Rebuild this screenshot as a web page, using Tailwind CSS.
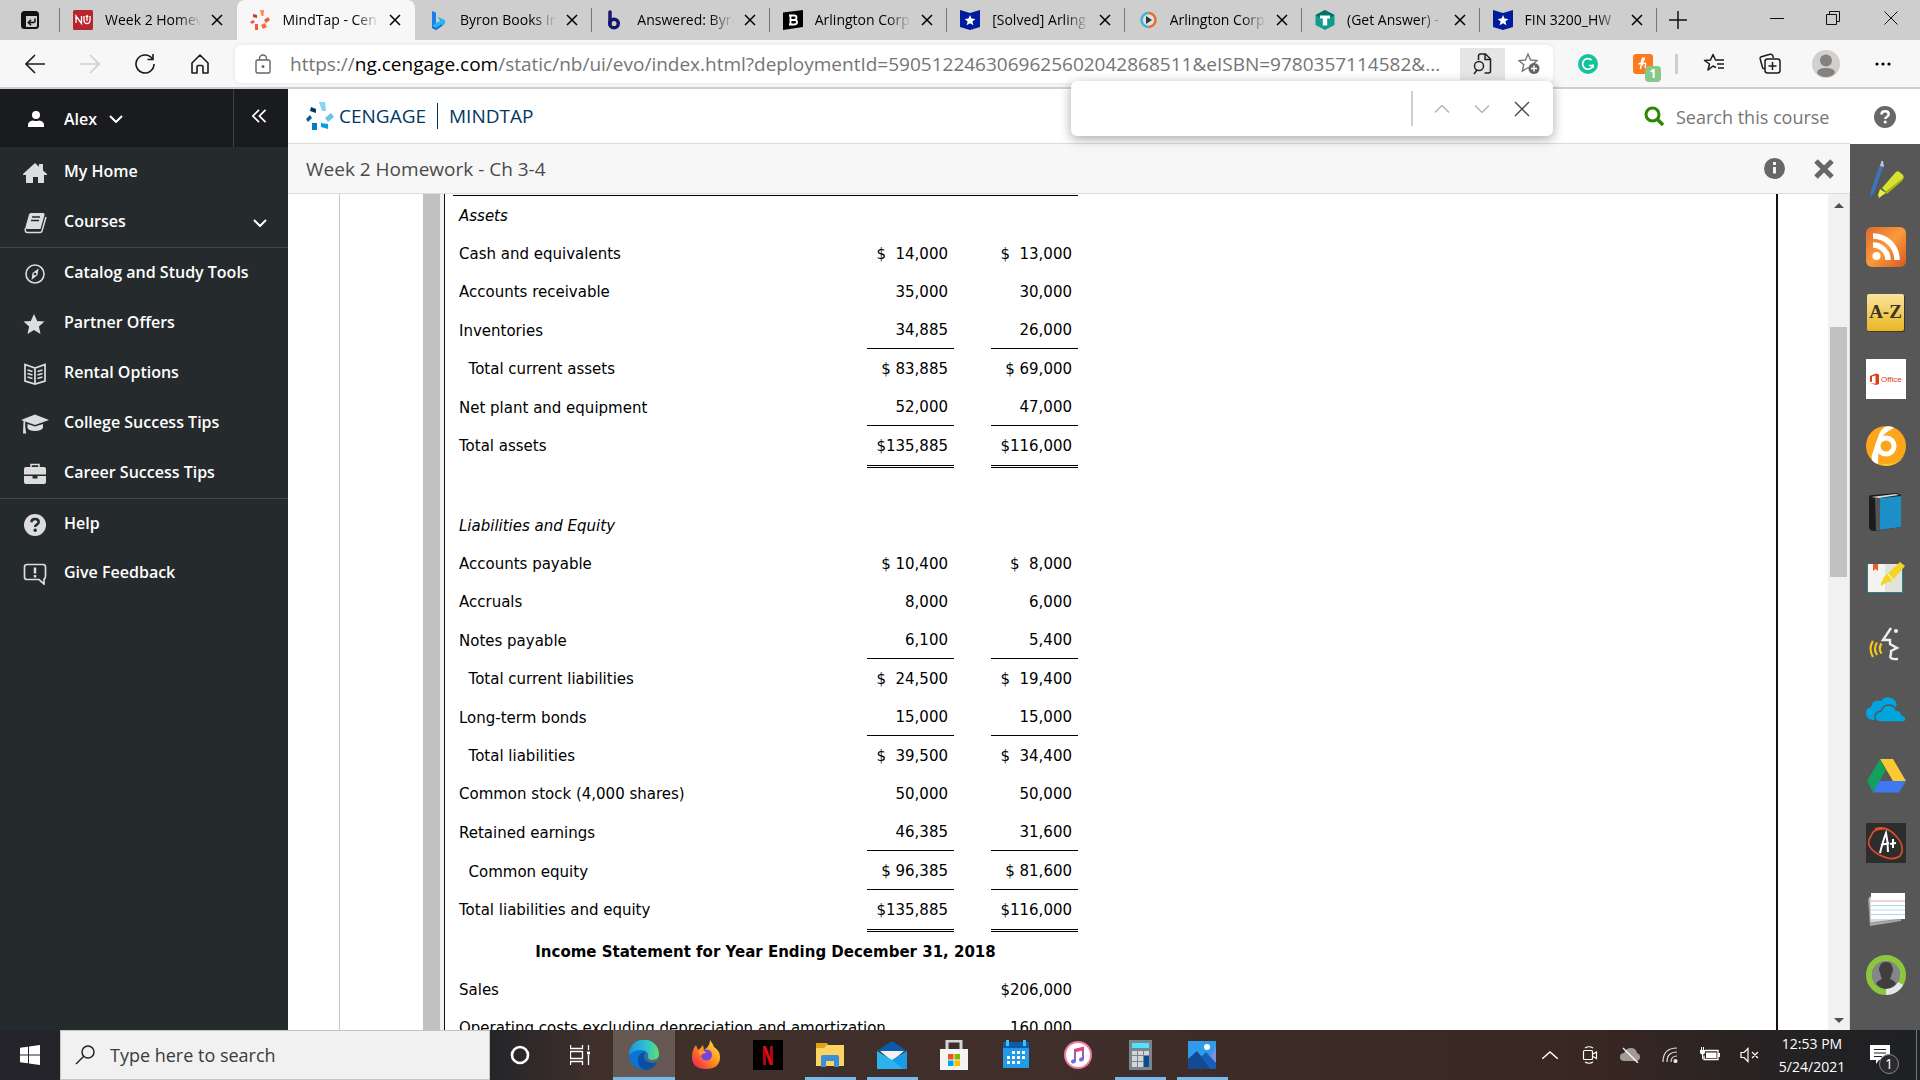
<!DOCTYPE html>
<html lang="en">
<head>
<meta charset="utf-8">
<title>MindTap - Cengage Learning</title>
<script src="https://cdn.jsdelivr.net/npm/@tailwindcss/browser@4"></script>
</head>
<body class="flex h-screen flex-col overflow-hidden bg-white font-['Open_Sans','Noto_Sans',sans-serif] text-black">

<svg class="hidden" aria-hidden="true">
  <symbol id="x" viewBox="0 0 12 12"><path d="M1 1l10 10M11 1L1 11" fill="none" stroke="currentColor" stroke-width="1.5"/></symbol>
  <symbol id="thin-x" viewBox="0 0 16 16"><path d="M1 1l14 14M15 1L1 15" fill="none" stroke="currentColor" stroke-width="1.3"/></symbol>
  <symbol id="down" viewBox="0 0 14 8"><path d="M1 1l6 6 6-6" fill="none" stroke="currentColor" stroke-width="2"/></symbol>
  <symbol id="thin-down" viewBox="0 0 16 8"><path d="M1 .5l7 7 7-7" fill="none" stroke="currentColor" stroke-width="1.3"/></symbol>
  <symbol id="shield" viewBox="0 0 20 20"><path d="M0 0l10 3 10-3v17l-10 3-10-3z" fill="#001b9b"/><path d="M10 5l1.500 3.600 3.900.3-3 2.500 1 3.800L10 13.200l-3.400 2 1-3.800-3-2.500 3.900-.3z" fill="#fff"/></symbol>
</svg>

<!-- Tab strip -->
<header class="flex h-10 shrink-0 items-stretch bg-[#cecece] text-sm">
  <div class="flex w-[60px] shrink-0 items-center justify-between pl-[21px]">
    <button aria-label="Tab actions"><svg class="h-[18px] w-[18px]" viewBox="0 0 18 18"><rect x="1" y="1" width="16" height="16" rx="2.500" fill="none" stroke="#111" stroke-width="2"/><path d="M1 2h16v3H1zM1 2h4v15H1z" fill="#111"/><path d="M14 7.500v2.500q0 1.500-1.500 1.500H7.500M10 8.800L7.300 11.500l2.700 2.700" fill="none" stroke="#111" stroke-width="1.500"/></svg></button>
    <span class="h-6 w-px bg-[#767676]"></span>
  </div>
  <nav class="flex min-w-0 flex-1" aria-label="Tabs">
    <div class="flex min-w-0 flex-1 items-center pl-[13px]">
      <svg class="size-5 shrink-0" viewBox="0 0 20 20"><rect width="20" height="20" rx="1.500" fill="#b9252f"/><path d="M3 13V6l5.500 7.500V6M11 6v4q0 3.500 3 3.500t3-3.500V6M14 5v6M12.700 6.500h2.600" fill="none" stroke="#fff" stroke-width="1.300"/></svg>
      <button class="ml-3 min-w-0 flex-1 overflow-hidden text-left whitespace-nowrap [mask-image:linear-gradient(to_right,black_75%,transparent)]">Week 2 Homew</button>
      <button class="mr-[14px] ml-[10px]" aria-label="Close tab"><svg class="size-3"><use href="#x"/></svg></button>
    </div>
    <div class="flex min-w-0 flex-1 items-center rounded-t-lg bg-[#f7f7f7] pl-[13px]">
      <svg class="size-5 shrink-0" viewBox="0 0 20 20" fill="#f0593a"><path d="M10 0h4l-.5 6h-2z" fill="#ff8a4c"/><path d="M14 10l4-3 2 3-4 3z"/><path d="M11 15l4-2 2 4-4 2z" fill="#ff6b3d"/><path d="M5 14h3v6H5z"/><path d="M0 12l3-2 2 2-3 2z"/><path d="M3 4l4 1v3L3 7z" fill="#e22c2c"/></svg>
      <button class="ml-3 min-w-0 flex-1 overflow-hidden text-left whitespace-nowrap [mask-image:linear-gradient(to_right,black_75%,transparent)]">MindTap - Cen</button>
      <button class="mr-[14px] ml-[10px]" aria-label="Close tab"><svg class="size-3"><use href="#x"/></svg></button>
    </div>
    <div class="flex min-w-0 flex-1 items-center pl-[13px]">
      <svg class="size-5 shrink-0" viewBox="0 0 20 20"><path d="M4 1l4 1.500V14l-4 4z" fill="#1c7df0"/><path d="M4 16l4-3 4-2-2-4 7 3v4l-9 6-4-2z" fill="#25b6ee"/><path d="M4 16l4 2 6-4v2l-6 4-4-2z" fill="#1a63dd"/></svg>
      <button class="ml-3 min-w-0 flex-1 overflow-hidden text-left whitespace-nowrap [mask-image:linear-gradient(to_right,black_75%,transparent)]">Byron Books In</button>
      <button class="mr-[13px] ml-[10px]" aria-label="Close tab"><svg class="size-3"><use href="#x"/></svg></button>
      <span class="h-6 w-px bg-[#767676]"></span>
    </div>
    <div class="flex min-w-0 flex-1 items-center pl-[13px]">
      <svg class="size-5 shrink-0" viewBox="0 0 20 20"><path d="M5 2v12" stroke="#16166f" stroke-width="3.500" stroke-linecap="round"/><circle cx="9" cy="13.500" r="4.300" fill="none" stroke="#16166f" stroke-width="3.500"/></svg>
      <button class="ml-3 min-w-0 flex-1 overflow-hidden text-left whitespace-nowrap [mask-image:linear-gradient(to_right,black_75%,transparent)]">Answered: Byro</button>
      <button class="mr-[13px] ml-[10px]" aria-label="Close tab"><svg class="size-3"><use href="#x"/></svg></button>
      <span class="h-6 w-px bg-[#767676]"></span>
    </div>
    <div class="flex min-w-0 flex-1 items-center pl-[13px]">
      <svg class="size-5 shrink-0" viewBox="0 0 20 20"><path d="M0 2.500L20 0v17L0 20z"/><path d="M7.500 5.500h3.500q2.500 0 2.500 2t-2 2.300q2.500.3 2.500 2.500t-3 2.200H7.500zM6 5.500h3M6 14.500h3M8 10h4" fill="none" stroke="#fff" stroke-width="1.900"/></svg>
      <button class="ml-3 min-w-0 flex-1 overflow-hidden text-left whitespace-nowrap [mask-image:linear-gradient(to_right,black_75%,transparent)]">Arlington Corp</button>
      <button class="mr-[13px] ml-[10px]" aria-label="Close tab"><svg class="size-3"><use href="#x"/></svg></button>
      <span class="h-6 w-px bg-[#767676]"></span>
    </div>
    <div class="flex min-w-0 flex-1 items-center pl-[13px]">
      <svg class="size-5 shrink-0"><use href="#shield"/></svg>
      <button class="ml-3 min-w-0 flex-1 overflow-hidden text-left whitespace-nowrap [mask-image:linear-gradient(to_right,black_75%,transparent)]">[Solved] Arling</button>
      <button class="mr-[13px] ml-[10px]" aria-label="Close tab"><svg class="size-3"><use href="#x"/></svg></button>
      <span class="h-6 w-px bg-[#767676]"></span>
    </div>
    <div class="flex min-w-0 flex-1 items-center pl-[13px]">
      <svg class="size-5 shrink-0" viewBox="0 0 20 20"><circle cx="10.500" cy="10" r="6" fill="#d8e4e8"/><path d="M10.500 17a7 7 0 0 1 0-14" fill="none" stroke="#43b4cf" stroke-width="2.500"/><path d="M10.500 3a7 7 0 0 1 0 14" fill="none" stroke="#f26a2a" stroke-width="2.500"/><path d="M8 6l6 4-6 4z" fill="#333"/></svg>
      <button class="ml-3 min-w-0 flex-1 overflow-hidden text-left whitespace-nowrap [mask-image:linear-gradient(to_right,black_75%,transparent)]">Arlington Corp</button>
      <button class="mr-[13px] ml-[10px]" aria-label="Close tab"><svg class="size-3"><use href="#x"/></svg></button>
      <span class="h-6 w-px bg-[#767676]"></span>
    </div>
    <div class="flex min-w-0 flex-1 items-center pl-[13px]">
      <svg class="size-5 shrink-0" viewBox="0 0 20 20"><path d="M10 0l9.500 5v10L10 20 .5 15V5z" fill="#0c9d8c"/><path d="M10 0l9.500 5L10 10 .5 5z" fill="#067266"/><path d="M5 5.500h10v3h-2.800v7H7.800v-7H5z" fill="#fff"/></svg>
      <button class="ml-3 min-w-0 flex-1 overflow-hidden text-left whitespace-nowrap [mask-image:linear-gradient(to_right,black_75%,transparent)]">(Get Answer) - A</button>
      <button class="mr-[13px] ml-[10px]" aria-label="Close tab"><svg class="size-3"><use href="#x"/></svg></button>
      <span class="h-6 w-px bg-[#767676]"></span>
    </div>
    <div class="flex min-w-0 flex-1 items-center pl-[13px]">
      <svg class="size-5 shrink-0"><use href="#shield"/></svg>
      <button class="ml-3 min-w-0 flex-1 overflow-hidden text-left whitespace-nowrap [mask-image:linear-gradient(to_right,black_75%,transparent)]">FIN 3200_HW</button>
      <button class="mr-[13px] ml-[10px]" aria-label="Close tab"><svg class="size-3"><use href="#x"/></svg></button>
      <span class="h-6 w-px bg-[#767676]"></span>
    </div>
  </nav>
  <div class="flex w-[263px] shrink-0 items-center">
    <button class="flex w-[42px] justify-center" aria-label="New tab"><svg class="size-[18px]" viewBox="0 0 18 18"><path d="M9 0v18M0 9h18" stroke="#111" stroke-width="1.500"/></svg></button>
    <button class="ml-[50px] flex w-14 justify-center pb-1" aria-label="Minimize"><svg class="size-[14px]" viewBox="0 0 14 14"><path d="M0 7.500h14" stroke="#111"/></svg></button>
    <button class="flex w-14 justify-center pb-1" aria-label="Restore"><svg class="size-[14px]" viewBox="0 0 14 14"><path d="M.5 3.500h10v10H.5zM3.500 3V.5h10v10H11" fill="none" stroke="#111"/></svg></button>
    <button class="flex w-[59px] justify-center pb-1" aria-label="Close window"><svg class="size-[14px]" viewBox="0 0 14 14"><path d="M.5.5l13 13M13.500.5l-13 13" stroke="#111"/></svg></button>
  </div>
</header>

<!-- Browser toolbar -->
<div class="relative flex h-[49px] shrink-0 items-center border-b-2 border-[#cfcfcf] bg-[#f7f7f7]">
  <div class="flex w-[235px] shrink-0 items-center pl-[7px] text-[#1b1b1b]">
    <button class="flex w-[55px] justify-center" aria-label="Back"><svg class="size-5" viewBox="0 0 20 20" fill="none" stroke="currentColor" stroke-width="1.600"><path d="M20 10H1M10 1L1 10l9 9"/></svg></button>
    <button class="flex w-[55px] justify-center text-[#cfcfcf]" aria-label="Forward"><svg class="size-5" viewBox="0 0 20 20" fill="none" stroke="currentColor" stroke-width="1.600"><path d="M0 10h19M10 1l9 9-9 9"/></svg></button>
    <button class="flex w-[55px] justify-center" aria-label="Refresh"><svg class="size-5" viewBox="0 0 20 20" fill="none" stroke="currentColor" stroke-width="1.600"><path d="M17.500 5A9 9 0 1 0 19 10M18 0v5.500h-5.500"/></svg></button>
    <button class="flex w-[55px] justify-center" aria-label="Home"><svg class="size-5" viewBox="0 0 20 20" fill="none" stroke="currentColor" stroke-width="1.600"><path d="M2 9l8-8 8 8v10h-5v-6q0-1.500-1.500-1.500h-3Q7 11.500 7 13v6H2z" stroke-linejoin="round"/></svg></button>
  </div>
  <div class="flex h-[38px] min-w-0 flex-1 items-center rounded-md bg-white shadow-[0_0_5px_rgba(0,0,0,0.08)]">
    <button class="flex w-[55px] shrink-0 justify-center" aria-label="Site information"><svg class="h-5 w-4" viewBox="0 0 16 20" fill="none" stroke="#666" stroke-width="1.400"><rect x="1" y="6" width="14" height="13" rx="1.500"/><path d="M4.500 6V4.500a3.500 3.500 0 0 1 7 0V6"/><circle cx="8" cy="12.500" r=".8" fill="#666"/></svg></button>
    <div role="textbox" aria-label="Address" class="min-w-0 flex-1 overflow-hidden text-[19px] leading-6 whitespace-nowrap text-[#757575]">https://<span class="text-black">ng.cengage.com</span>/static/nb/ui/evo/index.html?deploymentId=5905122463069625602042868511&amp;eISBN=9780357114582&amp;...</div>
    <button class="flex h-8 w-[45px] shrink-0 items-center justify-center bg-[#e5e5e5]" aria-label="Find on page"><svg class="h-[22px] w-5" viewBox="0 0 20 22" fill="none" stroke="#222" stroke-width="1.500"><path d="M5.500 7V3q0-2 2-2h5l5 5v12q0 2-2 2h-4M12 1v5.500h5.500"/><circle cx="6" cy="13" r="4.500"/><path d="M4 17l-3 4"/></svg></button>
    <button class="flex w-12 shrink-0 justify-center" aria-label="Add to favorites"><svg class="size-[22px]" viewBox="0 0 22 22"><path d="M10 1l2.600 6 6.400.6-4.800 4.200L15 18l-5-3.300L4.300 18l1.500-6.300L1 7.600 7.400 7z" fill="none" stroke="#777" stroke-width="1.400"/><circle cx="16" cy="15.500" r="5.500" fill="#666"/><path d="M16 12.500v6M13 15.500h6" stroke="#fff" stroke-width="1.400"/></svg></button>
  </div>
  <div class="flex w-[367px] shrink-0 items-center pl-[7px] text-[#1b1b1b]">
    <button class="flex w-14 justify-center" aria-label="Grammarly"><svg class="size-5" viewBox="0 0 20 20"><circle cx="10" cy="10" r="10" fill="#15c39a"/><path d="M13.500 6A5.300 5.300 0 1 0 15 11.500H11M15 10.500V14" fill="none" stroke="#fff" stroke-width="1.700"/></svg></button>
    <button class="relative flex w-[54px] justify-center" aria-label="Honey, 1 offer"><svg class="size-5" viewBox="0 0 20 20"><rect width="20" height="20" rx="3" fill="#ff7a1f"/><path d="M7.500 15L9 6q.5-2.500 2-2 1 1-1.500 4-1.500 1.500-4 2M8 12q2-3 3.500-3t1 2q-1 3 1 3 1 0 1.500-.8" fill="none" stroke="#fff" stroke-width="1.500"/></svg><span class="absolute top-[12px] left-[29px] h-4 w-4 rounded-sm bg-[#85c888] text-center text-xs leading-4 font-bold text-white">1</span></button>
    <span class="mr-[8px] ml-[5px] h-5 w-[3px] bg-[#cfcfcf]"></span>
    <button class="flex w-14 justify-center" aria-label="Favorites"><svg class="size-[22px]" viewBox="0 0 22 22" fill="none" stroke="currentColor" stroke-width="1.500"><path d="M13 14.500l-3-1.500-5 4 1.500-6L1.500 7.500l6-.5L10 1.500 12.500 7H21M14 11h7M15 15h6" stroke-linejoin="round"/></svg></button>
    <button class="flex w-14 justify-center" aria-label="Collections"><svg class="size-[22px]" viewBox="0 0 22 22" fill="none" stroke="currentColor" stroke-width="1.500"><rect x="6" y="6" width="15" height="14" rx="2.500"/><path d="M13.500 9v8M9.500 13h8M6 15.500q-2 .5-2.500-1L1.200 6Q.8 4.300 2.400 3.800L11 1.300q2-.4 2.600 1.200L14.500 5"/></svg></button>
    <button class="flex w-14 justify-center" aria-label="Profile"><svg class="size-7" viewBox="0 0 28 28"><circle cx="14" cy="14" r="14" fill="#d2d0ce"/><circle cx="14" cy="10.500" r="6" fill="#85817e"/><path d="M5 23q0-5 9-5t9 5q-3 4-9 4t-9-4z" fill="#85817e"/></svg></button>
    <button class="flex w-[58px] justify-center" aria-label="Settings and more"><svg class="h-1 w-4" viewBox="0 0 16 4"><circle cx="2" cy="2" r="1.600"/><circle cx="8" cy="2" r="1.600"/><circle cx="14" cy="2" r="1.600"/></svg></button>
  </div>
  <!-- Find-on-page popup -->
  <div class="absolute top-[41px] right-[367px] z-10 flex h-[55px] w-[482px] items-center rounded-md bg-white shadow-[0_3px_12px_rgba(0,0,0,0.35)]">
    <input type="text" aria-label="Find on page" class="h-9 min-w-0 flex-1 px-4 text-base outline-none">
    <span class="h-[35px] w-[2px] bg-[#cfcfcf]"></span>
    <div class="flex w-[140px] items-center pl-[9px]">
      <button class="flex w-10 justify-center text-[#b0b0b0]" aria-label="Previous"><svg class="h-2 w-4 rotate-180"><use href="#thin-down"/></svg></button>
      <button class="flex w-10 justify-center text-[#b0b0b0]" aria-label="Next"><svg class="h-2 w-4"><use href="#thin-down"/></svg></button>
      <button class="flex w-10 justify-center text-[#444]" aria-label="Close find"><svg class="size-4"><use href="#thin-x"/></svg></button>
    </div>
  </div>
</div>

<div class="flex min-h-0 flex-1">
  <!-- Course navigation -->
  <aside class="w-[288px] shrink-0 bg-[#252a2d] text-base font-semibold text-white">
    <div class="flex h-[58px] bg-[#1a1b1e]">
      <button class="flex flex-1 items-center pt-[2px] pl-[28px] text-left"><svg class="h-4 w-4" viewBox="0 0 16 16" fill="#fff"><circle cx="8" cy="4" r="4"/><path d="M0 16v-2q0-4 5-4.500 3 1 6 0 5 .5 5 4.500v2z"/></svg><span class="ml-5">Alex</span><svg class="ml-3 h-2 w-[14px]"><use href="#down"/></svg></button>
      <button class="flex w-[55px] items-center justify-center border-l border-[#3d4043] pr-1 pb-1" aria-label="Collapse menu"><svg class="h-[14px] w-[18px]" viewBox="0 0 18 16" fill="none" stroke="#fff" stroke-width="2"><path d="M9 1L2 8l7 7M16.500 1l-7 7 7 7"/></svg></button>
    </div>
    <nav>
      <a href="#" class="flex h-[50px] items-center pb-[2px] pl-[23px]"><svg class="mt-1 h-[22px] w-6" viewBox="0 0 24 22" fill="#ddd"><path d="M12 1l4 3.700V2h4v6.400l4 3.600v1h-3v8h-6v-6h-5v6H3v-8H0v-1z"/></svg><span class="ml-[17px]">My Home</span></a>
      <a href="#" class="flex h-[51px] items-center border-b border-[#43474a] pb-[2px] pl-[23px]"><svg class="mt-1 h-[22px] w-6" viewBox="0 0 24 22"><path d="M8 1h12q2 0 1.500 2l-4 14H4q-2 0-1.500-2L6 2.500Q6.500 1 8 1z" fill="#ddd"/><path d="M2.500 16q-1 4.500 2 4.500h12.500q1.500 0 2-1.500L23 5" fill="none" stroke="#ddd" stroke-width="1.500"/><path d="M9 5h8M8 8.500h8" stroke="#252a2d" stroke-width="1.500"/></svg><span class="ml-[17px]">Courses</span><svg class="mt-[3px] mr-[21px] ml-auto h-2 w-[14px]"><use href="#down"/></svg></a>
      <a href="#" class="flex h-[50px] items-center pb-[2px] pl-[23px]"><svg class="mt-1 h-[22px] w-6" viewBox="0 0 24 22"><circle cx="12" cy="11" r="9" fill="none" stroke="#ddd" stroke-width="1.600"/><path d="M15.500 5.500l-1 6.500-6 5 1-7z" fill="#ddd"/><circle cx="12" cy="11" r="1.300" fill="#252a2d"/></svg><span class="ml-[17px]">Catalog and Study Tools</span></a>
      <a href="#" class="flex h-[50px] items-center pb-[2px] pl-[23px]"><svg class="mt-1 h-[22px] w-6" viewBox="0 0 24 22" fill="#ddd"><path d="M11 1l3.200 7 7.300.5-5.600 5L17.500 21 11 17l-6.500 4 1.600-7.500-5.600-5L7.800 8z"/></svg><span class="ml-[17px]">Partner Offers</span></a>
      <a href="#" class="flex h-[50px] items-center pb-[2px] pl-[23px]"><svg class="mt-1 h-[22px] w-6" viewBox="0 0 24 22" fill="none" stroke="#ddd" stroke-width="1.700"><path d="M2 1.500l10 3.500 10-3.500V18l-10 3-10-3zM12 5v15M4.500 7l5 1.500M4.500 10.500l5 1.500M4.500 14l5 1.500M19.500 7l-5 1.500M19.500 10.500l-5 1.500M19.500 14l-5 1.500"/></svg><span class="ml-[17px]">Rental Options</span></a>
      <a href="#" class="flex h-[50px] items-center pb-[2px] pl-[21px]"><svg class="mt-1 h-[22px] w-7" viewBox="0 0 28 22" fill="#ddd"><path d="M14 1.500L28 7l-14 5L0 7z"/><path d="M6.500 11l7.500 2.500 8-2.500v4q-2 3-8 3t-7.500-3zM2.500 8h1.700v6l1 6.500H2z"/></svg><span class="ml-[15px]">College Success Tips</span></a>
      <a href="#" class="flex h-[51px] items-center border-b border-[#43474a] pb-[2px] pl-[23px]"><svg class="mt-1 h-[22px] w-6" viewBox="0 0 24 22" fill="#ddd"><path d="M3 4h18q2 0 2 2v5.500H1V6q0-2 2-2zM1 13h8.500v2.500h5V13H23v6q0 2-2 2H3q-2 0-2-2z"/><path d="M8 4.500v-3h8v3" fill="none" stroke="#ddd" stroke-width="1.500"/></svg><span class="ml-[17px]">Career Success Tips</span></a>
      <a href="#" class="flex h-[50px] items-center pb-[2px] pl-[23px]"><svg class="mt-1 h-[22px] w-6" viewBox="0 0 24 22"><circle cx="12" cy="11" r="11" fill="#ddd"/><path d="M8.500 8.200q0-3.200 3.600-3.200t3.600 3q0 1.600-1.900 2.700-1.600.9-1.600 2.300" fill="none" stroke="#252a2d" stroke-width="2.500"/><circle cx="12.200" cy="16.300" r="1.700" fill="#252a2d"/></svg><span class="ml-[17px]">Help</span></a>
      <a href="#" class="flex h-[48px] items-center pb-[2px] pl-[23px]"><svg class="mt-1 h-[22px] w-6" viewBox="0 0 24 22"><path d="M4 1.500h16q2.500 0 2.500 2.500v9q0 2.500-1.500 3v5l-5-4.500H4q-2.500 0-2.500-2.500V4Q1.500 1.500 4 1.500z" fill="none" stroke="#ddd" stroke-width="1.700"/><path d="M12 4.500v6M12 12v2.500" stroke="#ddd" stroke-width="2.500"/></svg><span class="ml-[17px]">Give Feedback</span></a>
    </nav>
  </aside>

  <div class="flex min-w-0 flex-1 flex-col">
    <div class="flex h-[55px] shrink-0 items-center border-b border-[#dcdcdc] pr-4 pl-[18px]">
      <svg class="size-7" viewBox="0 0 28 28"><path d="M13 0h6l1 9h-4z" fill="#84d6f7"/><path d="M19 16l6-5 3 4-6 5z" fill="#6cc3ea"/><path d="M15 21l7 1v5l-7-2z" fill="#00a4e4"/><path d="M6 21h5v7H6z" fill="#0081c6"/><path d="M0 17l4-4 2 3-4 4z" fill="#00629e"/><path d="M5 5l5 2v4L4 9z" fill="#003865"/></svg>
      <a href="#" class="ml-[5px] text-[19px] leading-6 text-[#003865]">CENGAGE</a>
      <span class="mx-[11px] h-[26px] w-px bg-[#003865]"></span>
      <a href="#" class="text-[19px] leading-6 text-[#003865]">MINDTAP</a>
      <label class="ml-auto flex items-center"><svg class="size-5" viewBox="0 0 20 20" fill="none" stroke="#2e8500"><circle cx="8.500" cy="8.500" r="6.500" stroke-width="3"/><path d="M13 13l6 6" stroke-width="3.500"/></svg><input type="search" aria-label="Search this course" placeholder="Search this course" class="ml-3 w-[158px] pt-px text-lg leading-6 placeholder:text-[#767676] [&::-webkit-search-cancel-button]:hidden"></label>
    </div>
    <div class="flex h-[50px] shrink-0 items-center border-b border-[#dcdcdc] bg-[#f7f7f7] pr-4 pl-[18px]">
      <h1 class="text-[19px] leading-6 text-[#4a4a4a]">Week 2 Homework - Ch 3-4</h1>
      <button class="mr-[29px] ml-auto" aria-label="Information"><svg class="size-[21px]" viewBox="0 0 21 21"><circle cx="10.500" cy="10.500" r="10.500" fill="#676767"/><path d="M10.500 4v3M10.500 9v6.500" stroke="#fff" stroke-width="2.800" fill="none"/></svg></button>
      <button aria-label="Close activity"><svg class="size-5" viewBox="0 0 20 20"><path d="M2 2l16 16M18 2L2 18" stroke="#676767" stroke-width="5"/></svg></button>
    </div>

    <!-- Activity document -->
    <div class="flex min-h-0 flex-1 overflow-hidden">
      <div class="w-[52px] shrink-0 border-r border-[#c8c8c8]"></div>
      <div class="ml-[83px] w-[21px] shrink-0 border-r-4 border-[#f1f1f1] bg-[#c1c1c1]"></div>
      <main class="min-w-0 flex-1 overflow-hidden border-x-2 border-l-[1px] border-[#111] pt-px pl-[8px]">
        <table class="w-[625px] table-fixed border-separate border-spacing-0 border-t border-black font-['DejaVu_Sans',Verdana,sans-serif] text-[15px] leading-5">
          <colgroup><col class="w-[414px]"><col class="w-[87px]"><col class="w-[37px]"><col class="w-[87px]"></colgroup>
          <tbody class="[&_td]:px-[6px] [&_td]:pt-[2px] [&_td]:pb-0 [&_td]:text-right [&_td]:whitespace-pre [&_th]:px-[6px] [&_th]:pt-[2px] [&_th]:pb-0 [&_th]:text-left [&_th]:font-normal [&_th]:whitespace-pre">
            <tr class="h-[38px]"><th colspan="4" class="italic">Assets</th></tr>
            <tr class="h-[38px]"><th>Cash and equivalents</th><td>$  14,000</td><td></td><td>$  13,000</td></tr>
            <tr class="h-[38px]"><th>Accounts receivable</th><td>35,000</td><td></td><td>30,000</td></tr>
            <tr class="h-[39px]"><th>Inventories</th><td class="border-b border-black">34,885</td><td></td><td class="border-b border-black">26,000</td></tr>
            <tr class="h-[38px]"><th>  Total current assets</th><td>$ 83,885</td><td></td><td>$ 69,000</td></tr>
            <tr class="h-[39px]"><th>Net plant and equipment</th><td class="border-b border-black">52,000</td><td></td><td class="border-b border-black">47,000</td></tr>
            <tr class="h-[42px] align-top leading-[36px]"><th>Total assets</th><td class="border-b-3 border-double border-black">$135,885</td><td></td><td class="border-b-3 border-double border-black">$116,000</td></tr>
            <tr class="h-[38px]"><td colspan="4"></td></tr>
            <tr class="h-[38px]"><th colspan="4" class="italic">Liabilities and Equity</th></tr>
            <tr class="h-[38px]"><th>Accounts payable</th><td>$ 10,400</td><td></td><td>$  8,000</td></tr>
            <tr class="h-[38px]"><th>Accruals</th><td>8,000</td><td></td><td>6,000</td></tr>
            <tr class="h-[39px]"><th>Notes payable</th><td class="border-b border-black">6,100</td><td></td><td class="border-b border-black">5,400</td></tr>
            <tr class="h-[38px]"><th>  Total current liabilities</th><td>$  24,500</td><td></td><td>$  19,400</td></tr>
            <tr class="h-[39px]"><th>Long-term bonds</th><td class="border-b border-black">15,000</td><td></td><td class="border-b border-black">15,000</td></tr>
            <tr class="h-[38px]"><th>  Total liabilities</th><td>$  39,500</td><td></td><td>$  34,400</td></tr>
            <tr class="h-[38px]"><th>Common stock (4,000 shares)</th><td>50,000</td><td></td><td>50,000</td></tr>
            <tr class="h-[39px]"><th>Retained earnings</th><td class="border-b border-black">46,385</td><td></td><td class="border-b border-black">31,600</td></tr>
            <tr class="h-[39px]"><th>  Common equity</th><td class="border-b border-black">$ 96,385</td><td></td><td class="border-b border-black">$ 81,600</td></tr>
            <tr class="h-[42px] align-top leading-[36px]"><th>Total liabilities and equity</th><td class="border-b-3 border-double border-black">$135,885</td><td></td><td class="border-b-3 border-double border-black">$116,000</td></tr>
            <tr class="h-[38px]"><td colspan="4"><div class="text-center font-bold">Income Statement for Year Ending December 31, 2018</div></td></tr>
            <tr class="h-[38px]"><th>Sales</th><td></td><td></td><td>$206,000</td></tr>
            <tr class="h-[38px]"><th>Operating costs excluding depreciation and amortization</th><td></td><td></td><td>160,000</td></tr>
          </tbody>
        </table>
      </main>
      <div class="ml-[50px] flex w-[22px] shrink-0 flex-col items-center border-r border-[#dcdcdc] bg-[#f1f1f1]">
        <svg class="mt-[9px] h-[5px] w-[10px] shrink-0" viewBox="0 0 10 5"><path d="M0 5l5-5 5 5z" fill="#505050"/></svg>
        <div class="mt-[119px] h-[250px] w-[17px] shrink-0 bg-[#c1c1c1]"></div>
        <svg class="mt-auto mb-[7px] h-[5px] w-[10px] shrink-0" viewBox="0 0 10 5"><path d="M0 0l5 5 5-5z" fill="#505050"/></svg>
      </div>
    </div>
  </div>

  <!-- App rail -->
  <aside class="flex w-[70px] shrink-0 flex-col bg-[#575757]">
    <button class="flex h-[55px] shrink-0 items-center justify-center bg-white" aria-label="Help"><svg class="size-[22px]" viewBox="0 0 22 22"><circle cx="11" cy="11" r="11" fill="#676767"/><path d="M7.500 8.500q0-3.200 3.600-3.200t3.600 3q0 1.600-1.900 2.700-1.600.9-1.600 2" fill="none" stroke="#fff" stroke-width="2.500"/><circle cx="11.200" cy="16" r="1.600" fill="#fff"/></svg></button>
    <div class="flex flex-1 flex-col items-center justify-between pt-[17px] pr-0 pb-[35px] pl-[2px]">
      <button aria-label="Highlights"><svg class="size-10" viewBox="0 0 40 40"><path d="M13.500 5l3.500 1-9 26-3.500 4V31z" fill="#3b75bd"/><path d="M15.500 0h1.500l1 6-4-1z" fill="#bcd"/><path d="M16 27L29 12q2-3 4.500-1l3.500 3q1.500 2 0 4L21 32z" fill="#d8e12c"/><path d="M19 31l18-14v2L21 33z" fill="#a9b617"/><path d="M14 28l6 4-3 2-4 3-1-3z" fill="#e6ee3e"/></svg></button>
      <button aria-label="RSS feed"><svg class="size-10" viewBox="0 0 40 40"><defs><linearGradient id="r" x2="1" y2="1"><stop stop-color="#e0692c"/><stop offset=".5" stop-color="#fb9a3c"/><stop offset="1" stop-color="#d9571e"/></linearGradient></defs><rect width="40" height="40" rx="6" fill="url(#r)"/><circle cx="10.500" cy="29" r="4" fill="#fff"/><path d="M7 18a15 15 0 0 1 15 15M7 9a24 24 0 0 1 24 24" fill="none" stroke="#fff" stroke-width="5.500"/></svg></button>
      <button aria-label="Glossary"><svg class="size-10" viewBox="0 0 40 40"><defs><linearGradient id="z" x2="0" y2="1"><stop stop-color="#fae5a0"/><stop offset="1" stop-color="#eab621"/></linearGradient></defs><rect x="2" y="2" width="37" height="37" rx="2" fill="#40392b"/><rect x="1" y="1" width="37" height="37" rx="2" fill="url(#z)"/><text x="19.500" y="25" text-anchor="middle" font-family="Liberation Serif" font-weight="bold" font-size="19" fill="#3a3520">A-Z</text></svg></button>
      <button aria-label="Office"><svg class="size-10" viewBox="0 0 40 40"><path d="M0 0h40v40H0z" fill="#fff"/><path d="M4 17l6-2.500 3 1v9.500l-3 1-6-2 5.500.7V16.500L6 17.500v5l-2 .8z" fill="#dc3e15"/><text x="15" y="23" font-family="Liberation Sans" font-size="8" fill="#dc3e15">Office</text></svg></button>
      <button aria-label="Polls"><svg class="size-10" viewBox="0 0 40 40"><circle cx="20" cy="20" r="20" fill="#fda61c"/><path d="M10 37Q40 42 40 20q0 18-20 20z" fill="#ffc72f"/><circle cx="20" cy="20" r="8" fill="none" stroke="#fff" stroke-width="5"/><path d="M19 1q6-2 9 1Q14 8 13 20T12 38Q4 36 6 29 9 20 12 11q2-7 7-10z" fill="#fff"/></svg></button>
      <button aria-label="Textbook"><svg class="size-10" viewBox="0 0 40 40"><path d="M3 5q0-2 3-2l25-2 4 2v32L9 39q-6 0-6-4z" fill="#1c1c1c"/><path d="M9 6h5v32l-4 1z" fill="#555"/><path d="M14 6l21-2v31l-21 3z" fill="#1c8fc9"/><path d="M5 5l25-3 3 1-20 3z" fill="#ddd"/></svg></button>
      <button aria-label="Notes"><svg class="size-10" viewBox="0 0 40 40"><path d="M1 6h36v29H1z" fill="#2a7f92"/><path d="M2 6h17v28H2z" fill="#f6f4f1"/><path d="M19 6h17v28H19z" fill="#e2e3dd"/><path d="M7 6h5v7l-2.500-2L7 13z" fill="#e8602c"/><path d="M34 4l5 4-13 15-6 2-5 3 0-3 3-6z" fill="#f5d327"/><path d="M22 16l5 6" stroke="#fff3a0" stroke-width="1.500"/></svg></button>
      <button aria-label="Read aloud"><svg class="size-10" viewBox="0 0 40 40" fill="none"><path d="M25 4l-8 12h7v4l7 4-6 3v3q-3 6 7 5" stroke="#eee" stroke-width="2.400"/><circle cx="30" cy="7" r="2" fill="#eee"/><path d="M7 17q-5 7 0 16M11 18.500q-4 6 0 12.500M15.500 19.500q-3.500 5 0 10" stroke="#f2c81c" stroke-width="2.200"/></svg></button>
      <button aria-label="OneDrive"><svg class="size-10" viewBox="0 0 40 40"><path d="M10 30H7q-7-1-7-6.500T5 17q2-8 10-6 4-5.500 10-3 5 1.500 5.500 7 0 8-8 10z" fill="#00a4de"/><path d="M15 32q-6 0-6-5t6-6q2-6 8-6 6 .5 7 5 5 0 6 5 4 1 4 4 0 3-3 3z" fill="#00a4de" stroke="#575757" stroke-width="1.500"/></svg></button>
      <button aria-label="Google Drive"><svg class="size-10" viewBox="0 0 40 40"><path d="M14 3h13l13 22H27z" fill="#fcc934"/><path d="M14 3l6 11L7 36 1 25z" fill="#12a05c"/><path d="M13 25h27l-7 11.500H7z" fill="#3e79ee"/></svg></button>
      <button aria-label="Practice"><svg class="size-10" viewBox="0 0 40 40" fill="none"><path d="M0 0h40v40H0z" fill="#2d2d2d"/><path d="M9 6Q20 2 30 13t4 20q-8 6-22-2T5 13q2-8 14-7" stroke="#e04e27" stroke-width="1.600"/><path d="M14 30q3-12 6-20 2 9 2 19M15 22l8-2M27 16v9M24 21l6-1" stroke="#fff" stroke-width="2"/></svg></button>
      <button aria-label="Flashcards"><svg class="size-10" viewBox="0 0 40 40"><path d="M2 10l33-5v27L4 37z" fill="#aaa"/><path d="M3 8l33-4v26L4 34z" fill="#d8d8d8" stroke="#777" stroke-width=".6"/><path d="M5 4h34v26H5z" fill="#fff"/><path d="M5 12h34" stroke="#f3a5a5"/><path d="M5 16.500h34M5 21h34M5 25.500h34" stroke="#a7dbf3"/></svg></button>
      <button aria-label="Profile progress"><svg class="size-10" viewBox="0 0 40 40"><circle cx="20" cy="20" r="14" fill="#85868a"/><path d="M14 11q1-4 6-4t6 4q2 3 0 7-1 4-2 6 5 2 6 5-5 5-10 5T10 29q1-3 6-5-1-2-2-6-2-4 0-7z" fill="#3f3f3f"/><circle cx="20" cy="20" r="17" fill="none" stroke="#8cc63e" stroke-width="6"/><path d="M20 37a17 17 0 0 0 14.700-8.500" fill="none" stroke="#e4e6e8" stroke-width="6"/></svg></button>
    </div>
  </aside>
</div>

<!-- Windows taskbar -->
<footer class="flex h-[50px] shrink-0 items-stretch bg-[linear-gradient(to_right,#25242a_0,#26262a_26%,#40302a_31%,#3f2e29_55%,#382722_83%,#222123_95%,#1e2124_100%)] text-white">
  <button class="flex w-[60px] items-center justify-center" aria-label="Start"><svg class="size-5" viewBox="0 0 20 20" fill="#fff"><path d="M0 2.800L8 1.700v7.800H0zM9 1.500L20 0v9.500H9zM0 10.500h8v7.800l-8-1.100zM9 10.500h11V20L9 18.500z"/></svg></button>
  <label class="flex w-[430px] items-center border border-[#c4c4c4] bg-[#f1f1f1] pl-[14px]"><svg class="size-5" viewBox="0 0 20 20" fill="none" stroke="#222" stroke-width="1.500"><circle cx="13" cy="7" r="6"/><path d="M8.500 11.500L1 19"/></svg><input type="text" aria-label="Taskbar search" placeholder="Type here to search" class="ml-[15px] flex-1 text-lg leading-6 placeholder:text-[#3b3b3b]"></label>
  <button class="flex w-[60px] items-center justify-center" aria-label="Cortana"><svg class="size-5" viewBox="0 0 20 20"><circle cx="10" cy="10" r="8" fill="none" stroke="#fff" stroke-width="2.600"/></svg></button>
  <button class="mr-[3px] flex w-[60px] items-center justify-center" aria-label="Task view"><svg class="size-5" viewBox="0 0 20 20" fill="none" stroke="#fff" stroke-width="1.300"><path d="M.5 0v3.500h12V0M.5 20v-3.500h12V20M.5 6.500h12v7H.5zM18.500 0v5M18.500 10v10"/><path d="M17 6.500h3v3h-3z" fill="#fff" stroke="none"/></svg></button>
  <button class="flex w-[62px] items-center justify-center border-b-3 border-[#76b9ed] bg-white/20 pt-[3px]" aria-label="Edge"><svg class="size-[30px]" viewBox="0 0 30 30"><defs><linearGradient id="e" x2="1"><stop stop-color="#1a94e0"/><stop offset=".6" stop-color="#31c3cd"/><stop offset="1" stop-color="#5fe06a"/></linearGradient></defs><circle cx="15" cy="15" r="15" fill="#0b74d4"/><path d="M0 15A15 15 0 0 1 30 14q0 6-7 6-5 0-4-3 1-6-6-7Q4 10 0 15z" fill="url(#e)"/><path d="M9 20q0-7 7-8-3 6 1 9 4 3 11 1-4 8-12 8-7-2-7-10z" fill="#0c4fa0"/><path d="M18 20q-3-4 0-7 2 2 1 4 0 3 4 3 5 0 7-3-1 3-2 5-6 2-10-2z" fill="#68615b"/></svg></button>
  <button class="flex w-[62px] items-center justify-center" aria-label="Firefox"><svg class="size-[30px]" viewBox="0 0 30 30"><defs><linearGradient id="f" x1="1" x2="0" y2="1"><stop stop-color="#fff04a"/><stop offset=".5" stop-color="#ff8a1e"/><stop offset="1" stop-color="#f0145a"/></linearGradient></defs><path d="M19 0q3 4 4 7 6 4 6 10 0 12-14 12T1 17Q1 10 5 5l2 5q3-2 5-5l1 5q6-4 6-10z" fill="url(#f)"/><circle cx="15.500" cy="15" r="5.500" fill="#7542e5"/><path d="M7 11q5-2 9 2-5 0-6 3z" fill="#ff9d27"/></svg></button>
  <button class="flex w-[62px] items-center justify-center" aria-label="Netflix"><svg class="size-[30px]" viewBox="0 0 30 30"><path d="M0 0h30v30H0z"/><path d="M10 6h3v19h-3zM17 6h3v19h-3z" fill="#b1060f"/><path d="M10 6h3l7 19h-3z" fill="#e50914"/></svg></button>
  <button class="flex w-[62px] justify-center" aria-label="File Explorer"><span class="flex w-[51px] items-center justify-center border-b-3 border-[#76b9ed] pt-[3px]"><svg class="size-[30px]" viewBox="0 0 30 30"><path d="M1 3h11l2 3v6H1z" fill="#dfa119"/><path d="M1 8h8l3-3h17v21H1z" fill="#fcd462"/><path d="M6 27V17q0-2 2-2h14q2 0 2 2v10h-5v-6h-8v6z" fill="#3a8fdd"/></svg></span></button>
  <button class="flex w-[62px] justify-center" aria-label="Mail"><span class="flex w-[51px] items-center justify-center border-b-3 border-[#76b9ed] pt-[3px]"><svg class="size-[30px]" viewBox="0 0 30 30"><path d="M0 11L15 1l15 10z" fill="#0a5cab"/><path d="M3 11h24L15 21z" fill="#f2f2f2"/><path d="M0 11l15 9 15-9v18H0z" fill="#2bb2ef"/><path d="M15 20L30 11v18H26z" fill="#1a9be6"/></svg></span></button>
  <button class="flex w-[62px] items-center justify-center" aria-label="Microsoft Store"><svg class="size-[30px]" viewBox="0 0 30 30"><path d="M8 10V1h14v9" fill="none" stroke="#d5d5d5" stroke-width="3"/><path d="M1 9h28v21H1z" fill="#f4f4f4"/><path d="M9 14h5.500v5.500H9z" fill="#f25022"/><path d="M15.500 14H21v5.500h-5.500z" fill="#7fba00"/><path d="M9 20.500h5.500V26H9z" fill="#00a4ef"/><path d="M15.500 20.500H21V26h-5.500z" fill="#ffb900"/></svg></button>
  <button class="flex w-[62px] items-center justify-center" aria-label="Calendar"><svg class="size-[30px]" viewBox="0 0 30 30"><path d="M2 3h26v25H2z" fill="#219ae8"/><path d="M2 2h26v6H2z" fill="#0b5cad"/><path d="M5 0h3v6H5zM22 0h3v6h-3z" fill="#42c3f7"/><path d="M11 11h3v3h-3zM16 11h3v3h-3zM21 11h3v3h-3zM6 16h3v3H6zM11 16h3v3h-3zM16 16h3v3h-3zM21 16h3v3h-3zM6 21h3v3H6zM11 21h3v3h-3zM16 21h3v3h-3z" fill="#fff"/></svg></button>
  <button class="flex w-[62px] items-center justify-center" aria-label="iTunes"><svg class="size-[30px]" viewBox="0 0 30 30"><defs><linearGradient id="i" x2="0" y2="1"><stop stop-color="#f5406f"/><stop offset="1" stop-color="#5b73f5"/></linearGradient></defs><circle cx="15" cy="15" r="13" fill="#fff" stroke="#ef7ca4" stroke-width="2"/><path d="M11 9l10-2.500V19q0 2-2.500 2.500T16 19.500q0-2 3-2.300v-6.500L13 12v9q0 2-2.500 2.500T8 21.500q0-2 3-2.300z" fill="url(#i)"/></svg></button>
  <button class="flex w-[62px] justify-center" aria-label="Calculator"><span class="flex w-[51px] items-center justify-center border-b-3 border-[#76b9ed] pt-[3px]"><svg class="size-[30px]" viewBox="0 0 30 30"><path d="M4 0h23v30H4z" fill="#7b858e"/><path d="M7 3h17v5H7z" fill="#50e3fb"/><path d="M7 11h5v4H7zM13 11h5v4h-5zM19 11h5v4h-5zM7 16h5v5H7zM13 16h5v5h-5zM7 22h5v5H7zM13 22h5v5h-5z" fill="#d2d6da"/><path d="M19 16h5v11h-5z" fill="#0b4a92"/></svg></span></button>
  <button class="flex w-[62px] justify-center" aria-label="Photos"><span class="flex w-[51px] items-center justify-center border-b-3 border-[#76b9ed] pt-[3px]"><svg class="size-[30px]" viewBox="0 0 30 30"><path d="M1 1h28v28H1z" fill="#2f9bea"/><path d="M29 7v22H15z" fill="#7e8fe0"/><path d="M1 19l9-8 14 18H1z" fill="#124a94"/><path d="M14 17l5-5 10 11v6H24z" fill="#1760b8"/><circle cx="20" cy="7" r="3" fill="#fff"/></svg></span></button>

  <div class="ml-auto flex items-center">
    <button class="flex w-10 justify-center" aria-label="Hidden icons"><svg class="h-2 w-4" viewBox="0 0 16 8"><path d="M0 8l8-7 8 7" fill="none" stroke="#fff" stroke-width="1.400"/></svg></button>
    <button class="flex w-10 justify-center" aria-label="Meet now"><svg class="size-[18px]" viewBox="0 0 18 18" fill="none" stroke="#fff" stroke-width="1.200"><rect x="2.500" y="4.500" width="9" height="9" rx="1"/><path d="M12 8l3.500-2v6.500L12 10.500M4 2q4-2.500 8 0M4 16q4 2.500 8 0"/></svg></button>
    <button class="flex w-10 justify-center" aria-label="OneDrive not connected"><svg class="h-4 w-5" viewBox="0 0 20 16"><path d="M4 14q-4 0-4-4t4-4q2-5 7-5t6 5q3 1 3 4t-3 4z" fill="#a29a97"/><path d="M3 1l15 15" stroke="#fff" stroke-width="1.300"/></svg></button>
    <button class="flex w-10 justify-center" aria-label="Wi-Fi"><svg class="size-4" viewBox="0 0 16 16" fill="none" stroke="#ddd" stroke-width="1.200"><path d="M1 15Q1 1 15 1M5 15Q5 5 15 5M9 15q0-6 6-6"/><circle cx="13.500" cy="14" r="1.500" fill="#fff"/></svg></button>
    <button class="flex w-10 justify-center" aria-label="Battery"><svg class="h-4 w-5" viewBox="0 0 20 16"><path d="M5 3.500h13v9H4v-4M19.300 6v4" fill="none" stroke="#fff" stroke-width="1.300"/><path d="M6 5.500h10.500V11H6zM0 3h5v2.500Q5 7.500 2.500 7.500T0 5.500z" fill="#fff"/><path d="M1.500 3V0M3.500 3V0M2.500 7v5" stroke="#fff"/></svg></button>
    <button class="flex w-10 justify-center" aria-label="Muted"><svg class="h-4 w-5" viewBox="0 0 20 16" fill="none" stroke="#fff" stroke-width="1.200"><path d="M1 5.500h3l4-4v13l-4-4H1zM12 5l6 6M18 5l-6 6"/></svg></button>
    <button class="w-[84px] text-center text-sm leading-[23px]">12:53 PM<br>5/24/2021</button>
    <button class="relative ml-[16px] h-10 w-9" aria-label="1 notification"><svg class="absolute top-[10px] left-0 size-5" viewBox="0 0 20 20"><path d="M0 0h20v15H9l-3 4v-4H0z" fill="#fff"/><path d="M4 4.500h12M4 8h12M4 11.500h8" stroke="#222"/></svg><span class="absolute top-[19px] left-[9px] size-5 rounded-full border border-[#888] bg-[#2b2b2d] text-center text-sm leading-[18px]">1</span></button>
    <span class="mr-[3px] ml-[10px] h-[50px] w-px bg-[#777]"></span>
  </div>
</footer>
</body>
</html>
